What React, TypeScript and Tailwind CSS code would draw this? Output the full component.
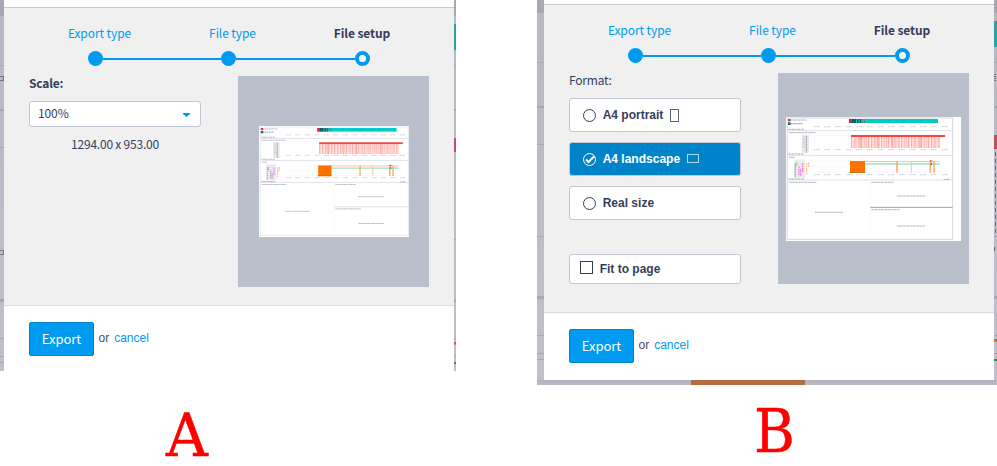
import type { ReactNode } from "react";

const SOURCE = "font-['Noto_Sans_CJK_SC','Open_Sans',sans-serif]";
const ARIAL = "font-['Liberation_Sans',Arial,sans-serif]";

type Band = { size: string; fill?: string };

function Edge({ width, bands }: { width: string; bands: Band[] }) {
  return (
    <div className={`flex shrink-0 flex-col overflow-hidden bg-linear-to-b from-[#b8b8c5] to-[#c1bfc9] ${width}`}>
      {bands.map((b, i) => (
        <div key={i} className={`shrink-0 ${b.size} ${b.fill ?? ""}`} />
      ))}
    </div>
  );
}

const LINE = "bg-[#a9aabd]";
const THICK = "bg-[#a8a7b4]";
const DARK = "bg-[#a8a7b3]";

const leftA: Band[] = [
  { size: "h-4", fill: DARK },
  { size: "h-[49px]" },
  { size: "h-px", fill: LINE },
  { size: "h-[10px]" },
  { size: "h-[5px] w-[4px] border border-l-0 border-[#77767f]" },
  { size: "h-[28px]" },
  { size: "h-[2px]", fill: THICK },
  { size: "h-[36px]" },
  { size: "h-px", fill: THICK },
  { size: "h-[102px]" },
  { size: "h-[5px] w-[4px] border border-l-0 border-[#77767f]" },
  { size: "h-[44px]" },
  { size: "h-[3px]", fill: THICK },
  { size: "h-[36px]" },
  { size: "h-px", fill: THICK },
  { size: "h-[17px]" },
  { size: "h-px", fill: THICK },
  { size: "h-[5px]" },
  { size: "h-px", fill: THICK },
];

const rightA: Band[] = [
  { size: "h-4", fill: DARK },
  { size: "h-2" },
  { size: "h-[26px]", fill: "bg-[#319fa0]" },
  { size: "h-[15px]" },
  { size: "h-px", fill: THICK },
  { size: "h-[43px]" },
  { size: "h-[2px]", fill: THICK },
  { size: "h-[27px]" },
  { size: "h-[14px]", fill: "bg-[#c34e60]" },
  { size: "h-[87px]" },
  { size: "h-px", fill: LINE },
  { size: "h-[59px]" },
  { size: "h-[3px]", fill: THICK },
  { size: "h-[36px]" },
  { size: "h-px", fill: THICK },
  { size: "h-[3px]" },
  { size: "h-[2px]", fill: "bg-[#c0604f]" },
  { size: "h-px", fill: "bg-[#b48999]" },
  { size: "h-[11px]" },
  { size: "h-px", fill: THICK },
  { size: "h-[5px]" },
  { size: "h-[2px]", fill: "bg-[#328a50]" },
];

const leftB: Band[] = [
  { size: "h-[13px]", fill: DARK },
  { size: "h-[49px]" },
  { size: "h-px", fill: LINE },
  { size: "h-[43px]" },
  { size: "h-[2px]", fill: THICK },
  { size: "h-[36px]" },
  { size: "h-px", fill: THICK },
  { size: "h-[91px]" },
  { size: "h-px", fill: "bg-[#9ea5c6]" },
  { size: "h-[59px]" },
  { size: "h-[3px]", fill: THICK },
  { size: "h-[36px]" },
  { size: "h-px", fill: THICK },
  { size: "h-[17px]" },
  { size: "h-px", fill: THICK },
  { size: "h-[5px]" },
  { size: "h-px", fill: THICK },
];

const dashes: Band[] = Array.from({ length: 12 }).flatMap(() => [
  { size: "h-[3px]" },
  { size: "h-[4px] w-px ml-px", fill: "bg-[#c0485c]" },
]);

const rightB: Band[] = [
  { size: "h-[13px]", fill: DARK },
  { size: "h-2" },
  { size: "h-[26px]", fill: "bg-[#319fa0]" },
  { size: "h-[15px]" },
  { size: "h-px", fill: LINE },
  { size: "h-[11px]" },
  { size: "h-[7px] w-[2px] border-x border-dotted border-[#77767f]" },
  { size: "h-[25px]" },
  { size: "h-[2px]", fill: THICK },
  { size: "h-[27px]" },
  { size: "h-[14px]", fill: "bg-[#c34e60]" },
  ...dashes,
  { size: "h-[3px]" },
  { size: "h-px", fill: "bg-[#9ea5c6]" },
  { size: "h-[10px]" },
  { size: "h-[4px] w-px", fill: "bg-[#66656e]" },
  { size: "h-[45px]" },
  { size: "h-[3px]", fill: THICK },
  { size: "h-[36px]" },
  { size: "h-px", fill: THICK },
  { size: "h-[3px]" },
  { size: "h-[2px]", fill: "bg-[#c06a43]" },
  { size: "h-px", fill: "bg-[#b48999]" },
  { size: "h-[11px]" },
  { size: "h-px", fill: THICK },
  { size: "h-[5px]" },
  { size: "h-[2px]", fill: "bg-[#328a50]" },
];

function Steps() {
  return (
    <div className={`flex flex-col text-[12px] leading-[18px] tracking-[-0.08px] text-[#009bf0] ${SOURCE}`}>
      <div className="flex pl-[29px]">
        <span className="w-[133px] text-center">Export type</span>
        <span className="w-[133px] text-center">File type</span>
        <span className="w-[126px] text-center font-bold text-[#363d59]">File setup</span>
      </div>
      <div className="mt-[9px] flex items-center pl-[84px]">
        <i className="size-[15px] rounded-full bg-[#009bf0]" />
        <i className="h-[2px] w-[118px] bg-[#009bf0]" />
        <i className="size-[15px] rounded-full bg-[#009bf0]" />
        <i className="h-[2px] w-[119px] bg-[#009bf0]" />
        <i className="size-[15px] rounded-full border-4 border-[#009bf0] bg-white" />
      </div>
    </div>
  );
}

function Caption({ x, y, w, color = "#777a8c", o = 0.6 }: { x: number; y: number; w: number; color?: string; o?: number }) {
  return <path d={`M${x} ${y}h${w}`} stroke={color} strokeWidth={3} strokeDasharray="5 1 3 1 7 2" opacity={o} />;
}

const ticks = Array.from({ length: 13 }, (_, i) => 101 + i * 32);

function Dashboard({ frame, plots, border, divider }: { frame: string; plots: string; border: string; divider: string }) {
  return (
    <g fill="none">
      <g transform={frame}>
        <rect x="22" y="24" width="496" height="364" stroke={border} strokeWidth="3" />
        <path d="M22 62H518M22 136H518M22 210H518" stroke="#dfe0e7" strokeWidth="3" />
        <path d="M271 211V388" stroke="#f8f8fa" strokeWidth="2" />
        <path d="M270 292H518" stroke={divider} strokeWidth="3" />
        <path d="M24 27h8v7h-8z" fill="#e0304c" />
        <path d="M24 37h8v8h-8z" fill="#087070" />
        <Caption x={32} y={30} w={49} />
        <Caption x={32} y={41} w={35} color="#365d68" />
        <Caption x={25} y={58} w={47} />
        <Caption x={27} y={68} w={80} />
        <Caption x={25} y={132} w={47} />
        <Caption x={27} y={142} w={19} />
        <Caption x={25} y={207} w={47} />
        <Caption x={27} y={217} w={83} />
        <Caption x={274} y={217} w={68} />
        <Caption x={491} y={208} w={18} />
        <Caption x={274} y={299} w={86} />
        <Caption x={351} y={258} w={85} />
        <Caption x={105} y={307} w={84} />
        <Caption x={351} y={348} w={85} />
        <rect x="65" y="74" width="22" height="54" fill="#e9e9eb" />
        <path d="M79 78V128" stroke="#555" strokeWidth="3" strokeDasharray="4 2" opacity=".65" />
        <path d="M71 80V116" stroke="#bbb" strokeWidth="5" strokeDasharray="3 1" opacity=".5" />
        <rect x="42" y="149" width="33" height="54" fill="#ebebed" />
        <path d="M46 160V202M50 158v12" stroke="#55b87b" strokeWidth="4" strokeDasharray="4 2" opacity=".7" />
        <path d="M57 170V196M62 178v20M68 160v26" stroke="#ee55e2" strokeWidth="4" strokeDasharray="5 2" opacity=".75" />
        <path d="M80 160V194M86 158v12" stroke="#ffa45c" strokeWidth="4" strokeDasharray="5 2" opacity=".7" />
      </g>
      <g transform={plots}>
        <rect x="207" y="27" width="267" height="12" fill="#00cbc4" />
        <rect x="207" y="27" width="6" height="12" fill="#ef1739" />
        <path d="M214 27h14v12h-14zM231 27h5v12h-5zM240 27h3v12h-3z" fill="#096365" />
        <path d="M237 27h3v12h-3zM245 27h3v12h-3zM252 27h3v12h-3z" fill="#697f80" />
        {[50, 119, 194].map((y) =>
          ticks.map((x) => <Caption key={`${x}-${y}`} x={x} y={y} w={17} o={0.35} />),
        )}
        <path d="M92 77H490M92 153H490M92 170H490M92 187H490" stroke="#eeeef2" strokeWidth="1" />
        <rect x="213" y="81" width="267" height="33" fill="#fff0ef" />
        <path d="M213 88H480" stroke="#ff857d" strokeWidth="14" strokeDasharray="3 2 2 3 4 2 1 3" opacity=".6" />
        <path d="M213 104H480" stroke="#ff857d" strokeWidth="20" strokeDasharray="3 2 2 3 4 2 1 3" opacity=".6" />
        <path d="M242 81v33M293 81v33M338 81v33M421 81v33" stroke="#ff8b82" strokeWidth="2" />
        <rect x="213" y="75" width="282" height="6" fill="#ff4339" />
        <path d="M210 154.500H480" stroke="#ffc3a0" strokeWidth="3" />
        <path d="M255 162H480" stroke="#8bd7a3" strokeWidth="4" opacity=".75" />
        <rect x="210" y="153" width="45" height="36" fill="#ff7200" />
        <path d="M207 187.500H255" stroke="#9a7825" strokeWidth="2" />
        <path d="M351 154V188M451 151V188M462 154V188" stroke="#f7a45c" strokeWidth="5" opacity=".85" />
        <path d="M394 154V188" stroke="#ffc590" strokeWidth="3" />
        <path d="M450 153h7" stroke="#ef5c46" strokeWidth="4" />
        <path d="M454 159v6" stroke="#16964b" strokeWidth="4" />
      </g>
    </g>
  );
}

function Footer() {
  return (
    <div className="flex items-start border-t border-[#d9d9de] bg-white pt-4 pl-[25px]">
      <button className={`h-[34px] w-[65px] rounded-[2px] border border-[#0084c9] bg-[#009bf0] text-[13px] leading-[32px] text-white ${SOURCE}`}>
        Export
      </button>
      <span className={`mt-2 ml-[4.500px] text-[12px] leading-4 text-[#454b64] ${ARIAL}`}>or</span>
      <a className={`mt-2 ml-[5px] text-[12px] leading-4 text-[#009bf0] ${ARIAL}`}>cancel</a>
    </div>
  );
}

function Option({ selected, children }: { selected?: boolean; children: ReactNode }) {
  return (
    <div
      className={`flex h-[34px] w-[172px] items-center rounded-[3px] border border-[#c4c7d1] pl-[13px] text-[12px] font-bold ${ARIAL} ${
        selected ? "bg-[#0084c9] text-white" : "bg-white text-[#363d59]"
      }`}
    >
      <svg className="mt-px mr-[6.700px] size-[13px]" viewBox="0 0 13 13" fill="none" stroke="currentColor">
        <circle cx="6.500" cy="6.500" r="6" />
        {selected && <path d="M3 6.500L5.500 9L11 3.500" strokeWidth="2" />}
      </svg>
      {children}
    </div>
  );
}

function DialogA() {
  return (
    <div className="flex h-[371px]">
      <Edge width="w-1" bands={leftA} />
      <div className="flex w-[450px] flex-col bg-white">
        <div className="mt-[7px] h-[298px] border-t border-[#c9c9ce] bg-[#f0f0f0] pt-4">
          <Steps />
          <div className="flex justify-between pr-[25px] pl-[25px]">
            <div className={`flex w-[172px] flex-col text-[12px] leading-[18px] text-[#363d59] ${SOURCE}`}>
              <span className="mt-2 font-bold tracking-[-0.2px]">Scale:</span>
              <div className="mt-[9px] flex h-[26px] items-center justify-between rounded-[3px] border border-[#c4c7d1] bg-white pr-[10px] pb-[2px] pl-2">
                <span className="tracking-[-0.1px]">100%</span>
                <svg className="mt-1 h-1 w-[7px]" viewBox="0 0 7 4" fill="#009bf0">
                  <path d="M0 0H7V1L3.500 4L0 1Z" />
                </svg>
              </div>
              <span className="mt-2 text-center tracking-[-0.22px]">1294.00 x 953.00</span>
            </div>
            <div className="mt-[10px] h-[211px] w-[191px] bg-[#b9bfcb] pt-[50px] pl-[21px]">
              <svg className="h-[111px] w-[150px] bg-white" viewBox="12 18 450 333">
                <Dashboard
                  frame="matrix(.8956 0 0 .892 -4 0)"
                  plots="matrix(.891 0 0 .892 2.5 0)"
                  border="#e6e7ec"
                  divider="#dcdde4"
                />
              </svg>
            </div>
          </div>
        </div>
        <Footer />
      </div>
      <Edge width="w-[2px]" bands={rightA} />
    </div>
  );
}

function DialogB() {
  return (
    <div className="flex flex-col">
      <div className="flex h-[380px]">
        <Edge width="w-[7px]" bands={leftB} />
        <div className="flex w-[450px] flex-col bg-white">
          <div className="mt-[4px] h-[308px] border-t border-[#c9c9ce] bg-[#f0f0f0] pt-4">
            <Steps />
            <div className="flex justify-between pr-[25px] pl-[25px]">
              <div className="flex w-[172px] flex-col">
                <span className={`mt-2 mb-[9px] text-[12px] leading-[18px] tracking-[-0.2px] text-[#363d59] ${SOURCE}`}>
                  Format:
                </span>
                <div className="flex flex-col gap-[10px]">
                  <Option>
                    A4 portrait
                    <i className="ml-[6.500px] h-[13px] w-[9px] border border-[#5b627c]" />
                  </Option>
                  <Option selected>
                    A4 landscape
                    <i className="-mt-px ml-[6.500px] h-[9px] w-[12px] border border-[#b2d9ee]" />
                  </Option>
                  <Option>Real size</Option>
                </div>
                <label className={`mt-[34px] flex h-[30px] items-center rounded-[3px] border border-[#c4c7d1] bg-white pl-[10px] text-[12px] font-bold text-[#363d59] ${ARIAL}`}>
                  <i className="mt-[-3px] mr-[6.700px] size-[13px] border border-[#363d59]" />
                  Fit to page
                </label>
              </div>
              <div className="mt-[10px] h-[211px] w-[191px] bg-[#b9bfcb] pt-[44px] pl-2">
                <svg className="h-[124px] w-[175px] bg-white" viewBox="18 21 525 372">
                  <Dashboard frame="translate(0 0)" plots="translate(0 0)" border="#d7d8df" divider="#a4a6b0" />
                </svg>
              </div>
            </div>
          </div>
          <Footer />
        </div>
        <Edge width="w-[3px]" bands={rightB} />
      </div>
      <div className="flex h-[5px] bg-linear-to-b from-[#b3b1bd] to-[#bbb9c5] pl-[154px]">
        <div className="w-[114px] border-l border-[#b95474] bg-[#b66b41]" />
      </div>
    </div>
  );
}

const LETTER =
  "font-['DejaVu_Serif_Condensed','DejaVu_Serif',serif] text-[60px] leading-[50px] text-[#ff0000] [-webkit-text-stroke:0.5px_#ff0000]";

export default function App() {
  return (
    <main className="flex h-[466px] w-[997px] justify-between bg-white">
      <section className="flex w-[456px] flex-col">
        <DialogA />
        <div className={`mt-[39px] pl-[166px] ${LETTER}`}>
          <span className="inline-block origin-left scale-x-107">A</span>
        </div>
      </section>
      <section className="flex w-[460px] flex-col">
        <DialogB />
        <div className={`mt-[21px] pl-[217px] ${LETTER}`}>
          <span className="inline-block origin-left scale-x-103">B</span>
        </div>
      </section>
    </main>
  );
}
